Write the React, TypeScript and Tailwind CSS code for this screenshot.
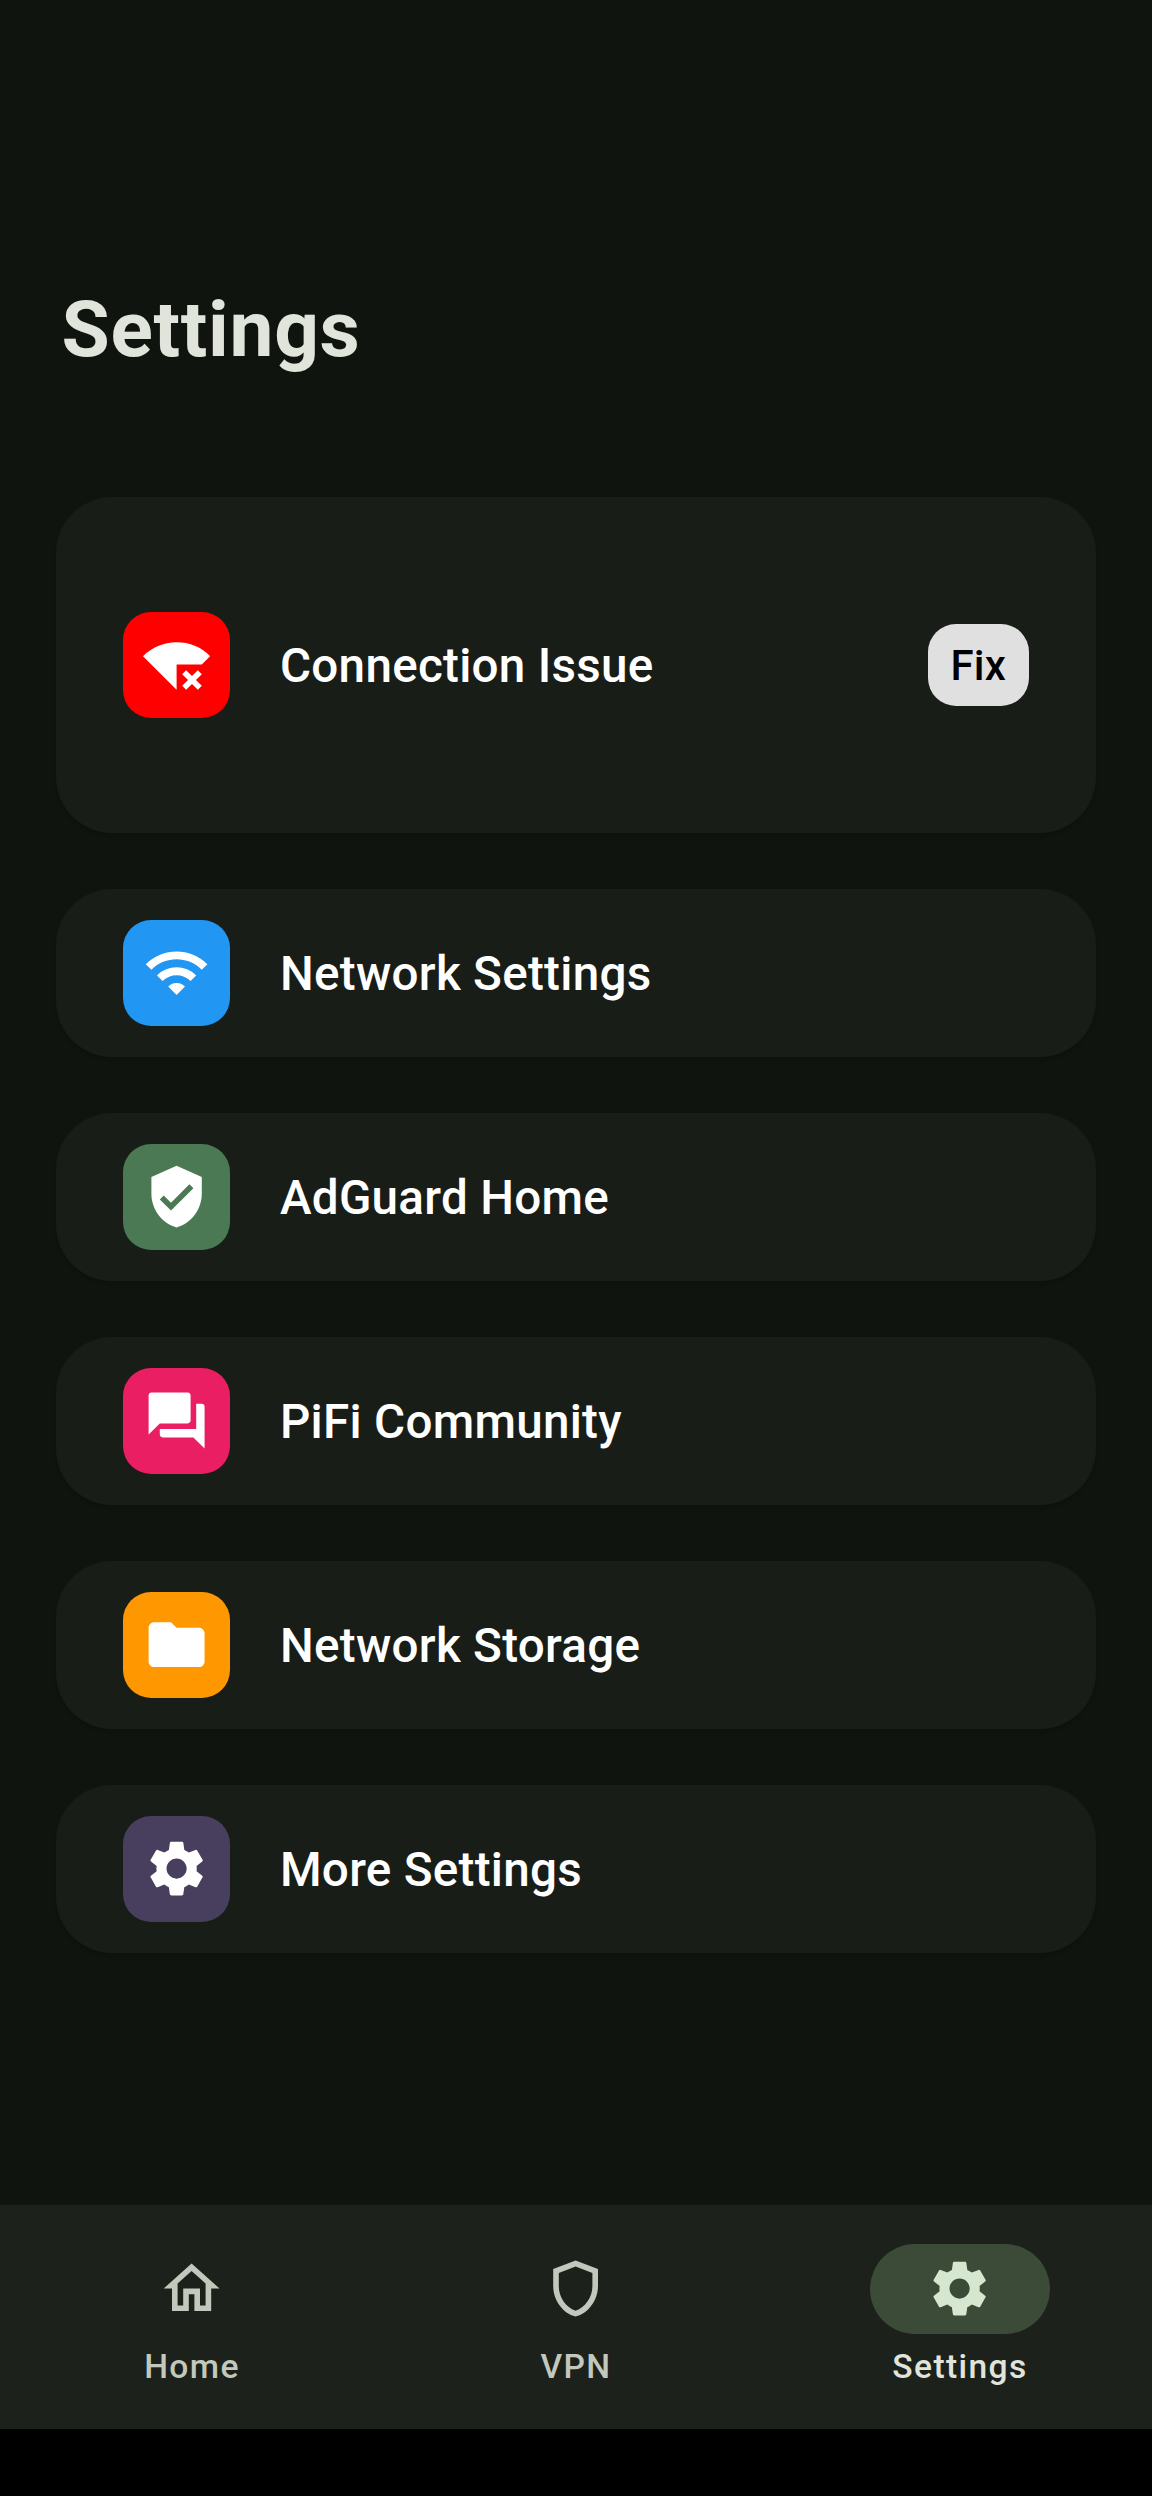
import React from 'react';
import { clsx } from 'clsx';

interface IconProps {
  path: string;
  className?: string;
}

interface SettingsItem {
  label: string;
  icon: string;
  color: string;
  action?: string;
}

const icons = {
  wifiBad:
    'M24 8.98A16.88 16.88 0 0 0 12 4C7.31 4 3.07 5.9 0 8.98L12 21v-9h8.99L24 8.98zM19.59 14l-2.09 2.09-2.09-2.09L14 15.41l2.09 2.09L14 19.59 15.41 21l2.09-2.08L19.59 21 21 19.59l-2.08-2.09L21 15.41 19.59 14z',
  wifi:
    'M1 9l2 2c4.97-4.97 13.03-4.97 18 0l2-2C16.93 2.93 7.08 2.93 1 9zm8 8l3 3 3-3c-1.65-1.66-4.34-1.66-6 0zm-4-4l2 2c2.76-2.76 7.24-2.76 10 0l2-2C15.14 9.14 8.87 9.14 5 13z',
  verified:
    'M12 1L3 5v6c0 5.55 3.84 10.74 9 12 5.16-1.26 9-6.45 9-12V5l-9-4zm-2 16l-4-4 1.41-1.41L10 14.17l6.59-6.59L18 9l-8 8z',
  forum:
    'M21 6h-2v9H6v2c0 .55.45 1 1 1h11l4 4V7c0-.55-.45-1-1-1zm-4 6V3c0-.55-.45-1-1-1H3c-.55 0-1 .45-1 1v14l4-4h10c.55 0 1-.45 1-1z',
  folder:
    'M10 4H4c-1.1 0-1.99.9-1.99 2L2 18c0 1.1.9 2 2 2h16c1.1 0 2-.9 2-2V8c0-1.1-.9-2-2-2h-8l-2-2z',
  settings:
    'M19.14 12.94c.04-.3.06-.61.06-.94 0-.32-.02-.64-.07-.94l2.03-1.58c.18-.14.23-.41.12-.61l-1.92-3.32c-.12-.22-.37-.29-.59-.22l-2.39.96c-.5-.38-1.03-.7-1.62-.94l-.36-2.54c-.04-.24-.24-.41-.48-.41h-3.84c-.24 0-.43.17-.47.41l-.36 2.54c-.59.24-1.13.57-1.62.94l-2.39-.96c-.22-.08-.47 0-.59.22L2.74 8.87c-.12.21-.08.47.12.61l2.03 1.58c-.05.3-.09.63-.09.94s.02.64.07.94l-2.03 1.58c-.18.14-.23.41-.12.61l1.92 3.32c.12.22.37.29.59.22l2.39-.96c.5.38 1.03.7 1.62.94l.36 2.54c.05.24.24.41.48.41h3.84c.24 0 .44-.17.47-.41l.36-2.54c.59-.24 1.13-.56 1.62-.94l2.39.96c.22.08.47 0 .59-.22l1.92-3.32c.12-.22.07-.47-.12-.61l-2.01-1.58zM12 15.6c-1.98 0-3.6-1.62-3.6-3.6s1.62-3.6 3.6-3.6 3.6 1.62 3.6 3.6-1.62 3.6-3.6 3.6z',
  home:
    'M12 5.69l5 4.5V18h-2v-6H9v6H7v-7.81l5-4.5M12 3L2 12h3v8h6v-6h2v6h6v-8h3L12 3z',
  shield:
    'M12 2L4 5v6.09c0 5.05 3.41 9.76 8 10.91 4.59-1.15 8-5.86 8-10.91V5l-8-3zm6 9.09c0 4-2.55 7.7-6 8.83-3.45-1.13-6-4.82-6-8.83v-4.7l6-2.25 6 2.25v4.7z',
};

const items: SettingsItem[] = [
  { label: 'Connection Issue', icon: icons.wifiBad, color: 'bg-[#ff0000]', action: 'Fix' },
  { label: 'Network Settings', icon: icons.wifi, color: 'bg-[#2196f3]' },
  { label: 'AdGuard Home', icon: icons.verified, color: 'bg-[#4a7953]' },
  { label: 'PiFi Community', icon: icons.forum, color: 'bg-[#e91e63]' },
  { label: 'Network Storage', icon: icons.folder, color: 'bg-[#ff9800]' },
  { label: 'More Settings', icon: icons.settings, color: 'bg-[#483f5f]' },
];

const tabs = [
  { label: 'Home', icon: icons.home },
  { label: 'VPN', icon: icons.shield },
  { label: 'Settings', icon: icons.settings },
];

const Icon: React.FC<IconProps> = ({ path, className }) => (
  <svg viewBox="0 0 24 24" fill="currentColor" className={clsx('size-[67.2px]', className)}>
    <path d={path} />
  </svg>
);

const SettingsCard: React.FC<{ item: SettingsItem }> = ({ item }) => (
  <li
    className={clsx(
      'flex items-center rounded-[56px] bg-[#191d17] px-[67.2px] shadow-[0_3px_3px_rgba(0,0,0,0.15)]',
      item.action ? 'h-[336px]' : 'h-[168px]'
    )}
  >
    <span
      className={clsx(
        'flex size-[106.4px] items-center justify-center rounded-[28px] text-white',
        item.color
      )}
    >
      <Icon path={item.icon} />
    </span>
    <span className="ml-[50.4px] flex-1 pt-px text-[47.6px] leading-[56px] font-medium tracking-[0.28px] text-white">
      {item.label}
    </span>
    {item.action && (
      <button className="h-[82px] w-[101px] rounded-[28px] bg-[#e0e0e0] pt-px text-[42px] leading-[50px] font-medium tracking-[0.28px] text-black">
        {item.action}
      </button>
    )}
  </li>
);

const App: React.FC = () => {
  const active = 'Settings';

  return (
    <div className="flex h-[2496px] w-[1152px] flex-col bg-[#10140f] font-['Roboto',sans-serif]">
      <main className="flex-1 px-14 pt-[283px]">
        <h1 className="pl-[5.6px] text-[78.4px] leading-[92px] font-bold tracking-[0.7px] text-[#e0e4db]">
          Settings
        </h1>
        <ul className="mt-[122px] space-y-14">
          {items.map((item) => (
            <SettingsCard key={item.label} item={item} />
          ))}
        </ul>
      </main>

      <nav className="grid h-56 grid-cols-3 bg-[#1d211b]">
        {tabs.map((tab) => (
          <a
            key={tab.label}
            className={clsx(
              'flex flex-col items-center pt-[39px]',
              tab.label === active ? 'text-[#e0e4db]' : 'text-[#c3c8bc]'
            )}
          >
            <span
              className={clsx(
                'flex h-[90px] w-[180px] items-center justify-center rounded-full',
                tab.label === active && 'bg-[#3c4b37] text-[#d5e8cf]'
              )}
            >
              <Icon path={tab.icon} />
            </span>
            <span className="mt-[10px] text-[33.6px] leading-[45px] font-medium tracking-[1.4px]">
              {tab.label}
            </span>
          </a>
        ))}
      </nav>
      <div className="h-[67px] bg-black" />
    </div>
  );
};

export default App;
